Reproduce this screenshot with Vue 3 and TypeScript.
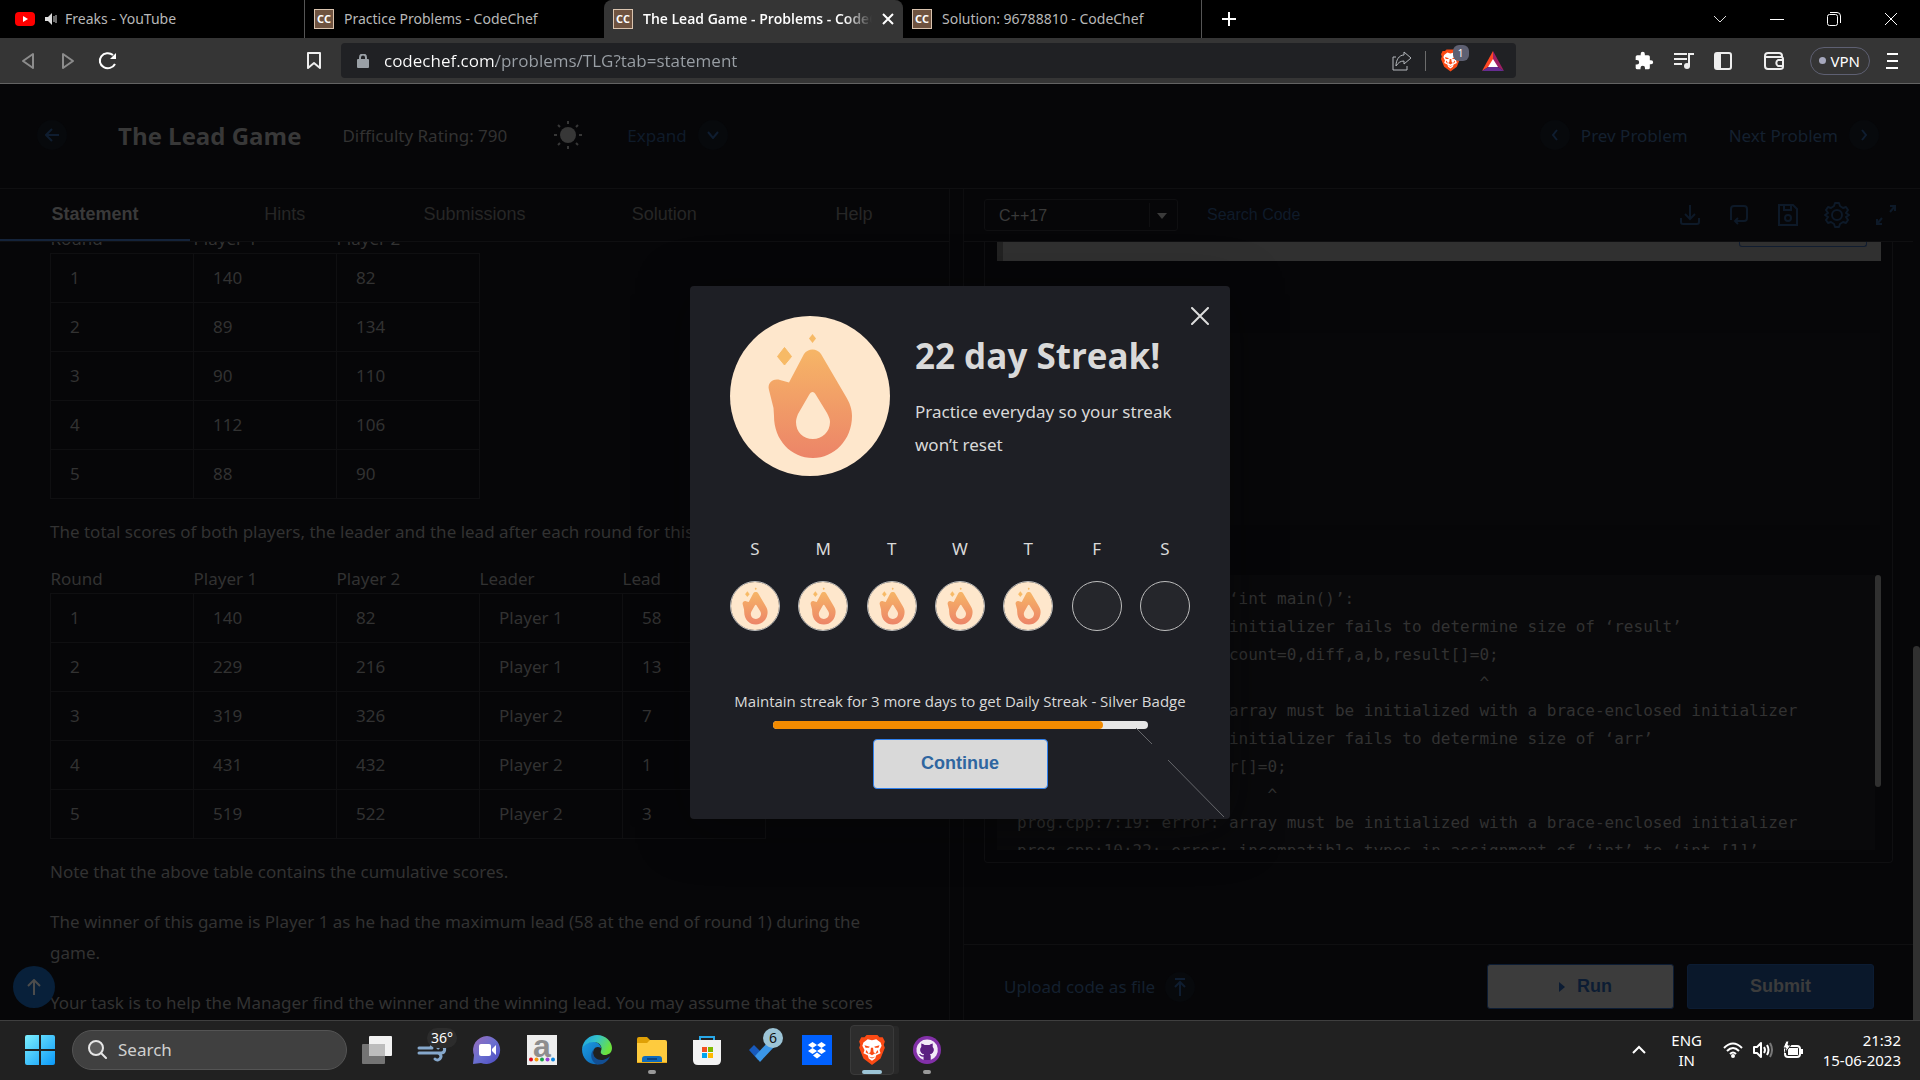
<script setup lang="ts">
import { ref } from 'vue'

interface BrowserTab {
  title: string
  icon: 'youtube' | 'codechef'
  active?: boolean
}

const browserTabs: BrowserTab[] = [
  { title: 'Freaks - YouTube', icon: 'youtube' },
  { title: 'Practice Problems - CodeChef', icon: 'codechef' },
  { title: 'The Lead Game - Problems - CodeChef', icon: 'codechef', active: true },
  { title: 'Solution: 96788810 - CodeChef', icon: 'codechef' },
]

const url = ref('codechef.com/problems/TLG?tab=statement')
const language = ref('C++17')
const query = ref('')

const sections: string[] = ['Statement', 'Hints', 'Submissions', 'Solution', 'Help']

const roundRows: number[][] = [
  [1, 140, 82],
  [2, 89, 134],
  [3, 90, 110],
  [4, 112, 106],
  [5, 88, 90],
]

const totalRows: (number | string)[][] = [
  [1, 140, 82, 'Player 1', 58],
  [2, 229, 216, 'Player 1', 13],
  [3, 319, 326, 'Player 2', 7],
  [4, 431, 432, 'Player 2', 1],
  [5, 519, 522, 'Player 2', 3],
]

const compilerOutput: string = [
  'prog.cpp: In function ‘int main()’:',
  'prog.cpp:6:37: error: initializer fails to determine size of ‘result’',
  '                  int count=0,diff,a,b,result[]=0;',
  ' '.repeat(48) + '^',
  'prog.cpp:6:37: error: array must be initialized with a brace-enclosed initializer',
  'prog.cpp:7:19: error: initializer fails to determine size of ‘arr’',
  '                int arr[]=0;',
  ' '.repeat(26) + '^',
  'prog.cpp:7:19: error: array must be initialized with a brace-enclosed initializer',
  'prog.cpp:10:22: error: incompatible types in assignment of ‘int’ to ‘int [1]’',
].join('\n')

const week: { day: string; done: boolean }[] = [
  { day: 'S', done: true },
  { day: 'M', done: true },
  { day: 'T', done: true },
  { day: 'W', done: true },
  { day: 'T', done: true },
  { day: 'F', done: false },
  { day: 'S', done: false },
]

const streak = 22
const target = 25
const progress = `${(streak / target) * 100}%`
</script>

<template>
  <div class="screen">
    <svg class="defs" width="0" height="0" aria-hidden="true">
      <defs>
        <linearGradient id="flame-fill" x1="0" y1="17" x2="0" y2="142" gradientUnits="userSpaceOnUse">
          <stop offset="0" stop-color="#f8bd66" />
          <stop offset="1" stop-color="#ec8468" />
        </linearGradient>
        <symbol id="flame" viewBox="0 0 160 160">
          <circle cx="80" cy="80" r="80" fill="#fee7cc" />
          <path
            fill="url(#flame-fill)"
            d="M74 38C78 32 87 32 91 38L115 79C120 87 122 93 122 100C122 124 104 142 83 142C61 142 44 124 44 100L43.500 92L39 74C37 67 43 62 50 64L59 66.500Z"
          />
          <path fill="#fee7cc" d="M79 79C81 75 84 75 86 79L97 97C99 101 100 103 100 106C100 116 92 123 83 123C73 123 66 116 66 106C66 103 67 101 68 98Z" />
          <path fill="#f7ba66" d="M54.500 31.500L61.500 40.500L54.500 49L47.500 40.500Z" stroke="#f7ba66" stroke-linejoin="round" />
          <path fill="#f7ba66" d="M82.500 18L86 22.500L82.500 27L79 22.500Z" />
        </symbol>
        <symbol id="lion" viewBox="0 0 24 28">
          <path fill="#fb4a14" d="M7 0H17L19 2L22 2L24 6L23 9L24 12L20 22L12 28L4 22L0 12L1 9L0 6L2 2L5 2Z" />
          <path
            fill="#fff"
            d="M8 4L12 5L16 4L20 7L21 10L19 14L20 17L16 19L15 22L12 24L9 22L8 19L4 17L5 14L3 10L4 7Z"
          />
          <path fill="#fb4a14" d="M5 9.500L10 11L9 12L6 12ZM19 9.500L14 11L15 12L18 12ZM11 12H13L13.500 16L15 17L12 19L9 17L10.500 16ZM8.500 20L12 21L15.500 20L12 22ZM7 14L9 18L6 16ZM17 14L15 18L18 16Z" />
        </symbol>
      </defs>
    </svg>

    <header class="chrome">
      <div class="tabstrip">
        <div v-for="tab in browserTabs" :key="tab.title" class="tab" :class="{ active: tab.active }">
          <template v-if="tab.icon === 'youtube'">
            <svg class="favicon" width="20" height="20" viewBox="0 0 20 20">
              <rect y="3" width="20" height="14" rx="4" fill="#f00" />
              <path d="M8 7L13 10L8 13Z" fill="#fff" />
            </svg>
            <svg class="speaker" width="12" height="12" viewBox="0 0 12 12">
              <path d="M0 4H3L7 0V12L3 8H0Z" fill="#ddd" />
              <path d="M9 3V9M11 2V10" stroke="#ddd" fill="none" />
            </svg>
          </template>
          <span v-else class="favicon cc">CC</span>
          <span class="tab-title">{{ tab.title }}</span>
          <button v-if="tab.active" class="plain" aria-label="Close tab">
            <svg width="12" height="12" viewBox="0 0 12 12"><path d="M1 1L11 11M11 1L1 11" stroke="#fff" stroke-width="2" /></svg>
          </button>
        </div>
        <button class="plain new-tab" aria-label="New tab">
          <svg width="16" height="16" viewBox="0 0 16 16"><path d="M8 1V15M1 8H15" stroke="#fff" stroke-width="2" /></svg>
        </button>
        <div class="window-controls">
          <button class="plain" aria-label="Search tabs">
            <svg width="14" height="14" viewBox="0 0 14 14"><path d="M1 4L7 10L13 4" stroke="#ddd" fill="none" /></svg>
          </button>
          <button class="plain" aria-label="Minimize">
            <svg width="14" height="14" viewBox="0 0 14 14"><path d="M0 7.500H14" stroke="#fff" /></svg>
          </button>
          <button class="plain" aria-label="Restore">
            <svg width="14" height="14" viewBox="0 0 14 14">
              <rect x=".5" y="2.500" width="10" height="11" rx="2" fill="none" stroke="#fff" />
              <path d="M3 .5H10Q13.500 .5 13.500 4V11" fill="none" stroke="#fff" />
            </svg>
          </button>
          <button class="plain" aria-label="Close window">
            <svg width="14" height="14" viewBox="0 0 14 14"><path d="M1 1L13 13M13 1L1 13" stroke="#fff" /></svg>
          </button>
        </div>
      </div>

      <div class="toolbar">
        <div class="nav-buttons">
          <button class="plain" aria-label="Back">
            <svg width="20" height="20" viewBox="0 0 20 20"><path d="M15 3V17L5 10Z" fill="none" stroke="#8c8c8c" stroke-width="2" stroke-linejoin="round" /></svg>
          </button>
          <button class="plain" aria-label="Forward">
            <svg width="20" height="20" viewBox="0 0 20 20"><path d="M5 3V17L15 10Z" fill="none" stroke="#8c8c8c" stroke-width="2" stroke-linejoin="round" /></svg>
          </button>
          <button class="plain" aria-label="Reload">
            <svg width="20" height="20" viewBox="0 0 20 20">
              <path d="M17 13A8 7.500 0 1 1 15 4" fill="none" stroke="#fff" stroke-width="2" />
              <path d="M18 2V8H12Z" fill="#fff" />
            </svg>
          </button>
        </div>
        <button class="plain bookmark" aria-label="Bookmark this page">
          <svg width="14" height="18" viewBox="0 0 14 18"><path d="M1 1H13V16L7 11L1 16Z" fill="none" stroke="#eee" stroke-width="2" stroke-linejoin="round" /></svg>
        </button>
        <div class="address">
          <svg width="12" height="14" viewBox="0 0 12 14">
            <rect y="5" width="12" height="9" rx="1" fill="#9aa0a6" />
            <path d="M3 6V3.500A3 3 0 0 1 9 3.500V6" fill="none" stroke="#9aa0a6" stroke-width="2" />
          </svg>
          <input v-model="url" type="text" aria-label="Address" spellcheck="false" />
          <svg width="20" height="20" viewBox="0 0 20 20" fill="none" stroke="#b4b8bc">
            <path d="M4 6H1V19H15V15" stroke-width="1" />
            <path d="M12 1L19 7L12 13V10C8 10 6 12 4 15C4 9 7 4 12 4Z" stroke-linejoin="round" />
          </svg>
          <i class="divider"></i>
          <span class="shield">
            <svg width="19" height="23"><use href="#lion" /></svg>
            <b>1</b>
          </span>
          <svg width="22" height="20" viewBox="0 0 22 20">
            <path d="M11 0L0 20L11 13Z" fill="#ff4724" />
            <path d="M11 0L22 20L11 13Z" fill="#9e1f63" />
            <path d="M0 20H22L11 13Z" fill="#662d91" />
            <path d="M11 8L16 16H6Z" fill="#fff" />
          </svg>
        </div>
        <div class="extensions">
          <svg width="20" height="20" viewBox="0 0 24 24"><path fill="#fff" d="M20.500 11H19V7a2 2 0 0 0-2-2h-4V3.500a2.500 2.500 0 0 0-5 0V5H4a2 2 0 0 0-2 2v3.800h1.500a2.700 2.700 0 0 1 0 5.400H2V20a2 2 0 0 0 2 2h3.800v-1.500a2.700 2.700 0 0 1 5.400 0V22H17a2 2 0 0 0 2-2v-4h1.500a2.500 2.500 0 0 0 0-5z" /></svg>
          <svg width="20" height="18" viewBox="0 0 20 18">
            <path d="M0 2H13M0 7H13M0 12H8M15 14V2H20" stroke="#eee" stroke-width="2" fill="none" />
            <circle cx="13" cy="14" r="3" fill="#eee" />
          </svg>
          <svg class="wide-gap" width="18" height="18" viewBox="0 0 18 18">
            <rect x="1" y="1" width="16" height="16" rx="2" fill="none" stroke="#eee" stroke-width="2" />
            <path d="M1 1H7V17H1Z" fill="#eee" />
          </svg>
          <svg width="20" height="18" viewBox="0 0 20 18" fill="none" stroke="#eee" stroke-width="2">
            <path d="M18 5V4Q18 1 15 1H4Q1 1 1 4V14Q1 17 4 17H16Q19 17 19 15M1 5H17Q19 5 19 7V14H14A3.500 3.500 0 0 1 14 8H19" />
          </svg>
          <button class="vpn"><i></i>VPN</button>
          <button class="plain" aria-label="Menu">
            <svg width="12" height="18" viewBox="0 0 12 18"><path d="M1 2H12M1 9H12M0 16H12" stroke="#fff" stroke-width="2" /></svg>
          </button>
        </div>
      </div>
    </header>

    <main class="page">
      <header class="problem-header">
        <a class="circle" href="#back" aria-label="Back">
          <svg width="14" height="14" viewBox="0 0 14 14"><path d="M14 7H2M7 1L1 7L7 13" /></svg>
        </a>
        <h1>The Lead Game</h1>
        <span class="rating">Difficulty Rating: 790</span>
        <button class="plain sun" aria-label="Switch theme">
          <svg width="28" height="28" viewBox="0 0 28 28">
            <circle cx="14" cy="14" r="8" fill="#373737" />
            <path d="M14 0V3M14 25V28M0 14H3M25 14H28M4 4L6 6M22 22L24 24M4 24L6 22M22 6L24 4" stroke="#373737" stroke-width="2" />
          </svg>
        </button>
        <a class="link-group expand" href="#expand">
          Expand
          <span class="circle"><svg width="12" height="8" viewBox="0 0 12 8"><path d="M1 1L6 7L11 1" /></svg></span>
        </a>
        <nav class="pager">
          <a class="link-group" href="#prev">
            <span class="circle"><svg width="8" height="12" viewBox="0 0 8 12"><path d="M6 1L2 6L6 11" /></svg></span>
            Prev Problem
          </a>
          <a class="link-group" href="#next">
            Next Problem
            <span class="circle"><svg width="8" height="12" viewBox="0 0 8 12"><path d="M2 1L6 6L2 11" /></svg></span>
          </a>
        </nav>
      </header>

      <div class="panes">
        <section class="statement">
          <nav class="sections">
            <button v-for="(name, i) in sections" :key="name" :class="{ current: i === 0 }">{{ name }}</button>
          </nav>
          <div class="scroll-area">
            <article class="prose">
              <table>
                <thead>
                  <tr><th>Round</th><th>Player 1</th><th>Player 2</th></tr>
                </thead>
                <tbody>
                  <tr v-for="row in roundRows" :key="row[0]">
                    <td v-for="(cell, i) in row" :key="i">{{ cell }}</td>
                  </tr>
                </tbody>
              </table>
              <p>The total scores of both players, the leader and the lead after each round for this game is:</p>
              <table>
                <thead>
                  <tr><th>Round</th><th>Player 1</th><th>Player 2</th><th>Leader</th><th>Lead</th></tr>
                </thead>
                <tbody>
                  <tr v-for="row in totalRows" :key="row[0]">
                    <td v-for="(cell, i) in row" :key="i">{{ cell }}</td>
                  </tr>
                </tbody>
              </table>
              <p>Note that the above table contains the cumulative scores.</p>
              <p>The winner of this game is Player 1 as he had the maximum lead (58 at the end of round 1) during the<br />game.</p>
              <p>Your task is to help the Manager find the winner and the winning lead. You may assume that the scores</p>
            </article>
          </div>
        </section>

        <section class="workbench">
          <div class="editor-bar">
            <div class="select-box">
              <select v-model="language" aria-label="Language">
                <option>C++17</option>
                <option>Python3</option>
                <option>Java</option>
              </select>
              <i></i>
              <svg width="10" height="6" viewBox="0 0 10 6"><path d="M0 0H10L5 6Z" fill="#3a3a3a" /></svg>
            </div>
            <a class="search-code" href="#search">Search Code</a>
            <div class="editor-icons">
              <button class="plain" aria-label="Download">
                <svg width="26" height="26" viewBox="0 0 26 26"><path d="M13 3V17M8 12L13 17L18 12M4 16V20Q4 22 6 22H20Q22 22 22 20V16" /></svg>
              </button>
              <button class="plain" aria-label="Reset">
                <svg width="26" height="26" viewBox="0 0 26 26"><path d="M5 18V7Q5 4 8 4H18Q21 4 21 7V16Q21 19 18 19H9M12 16L9 19L12 22" /></svg>
              </button>
              <button class="plain" aria-label="Save">
                <svg width="26" height="26" viewBox="0 0 26 26"><path d="M4 3H18L22 7V23H4ZM9 3V8H16V3" /><circle cx="13" cy="16" r="3" /></svg>
              </button>
              <button class="plain" aria-label="Settings">
                <svg width="26" height="26" viewBox="0 0 26 26">
                  <path d="M11 1H15L16 4L19 6L22 5L24 8L22 11L25 13L22 15L24 18L22 21L19 20L16 22L15 25H11L10 22L7 20L4 21L2 18L4 15L1 13L4 11L2 8L4 5L7 6L10 4Z" stroke-linejoin="round" />
                  <circle cx="13" cy="13" r="5" />
                </svg>
              </button>
              <button class="plain" aria-label="Full screen">
                <svg width="26" height="26" viewBox="0 0 26 26"><path d="M17 4H22V9M22 4L17 10M4 17V22H9M4 22L9 16" /></svg>
              </button>
            </div>
          </div>
          <div class="card">
            <div class="editor-strip"><span></span></div>
            <div class="tests"></div>
            <div class="output-row">
              <pre class="output">{{ compilerOutput }}</pre>
              <i class="output-scroll"></i>
            </div>
          </div>
          <footer class="actions">
            <a class="link-group" href="#upload">
              Upload code as file
              <span class="circle"><svg width="14" height="18" viewBox="0 0 14 18"><path d="M2 1H12M7 18V4M2 9L7 4L12 9" /></svg></span>
            </a>
            <button class="run">
              <svg width="6" height="10" viewBox="0 0 6 10"><path d="M0 0L6 5L0 10Z" fill="#0c1c33" /></svg>Run
            </button>
            <button class="submit">Submit</button>
          </footer>
        </section>
      </div>

      <button class="to-top" aria-label="Scroll to top">
        <svg width="16" height="16" viewBox="0 0 16 16"><path d="M8 16V1M2 7L8 1L14 7" fill="none" stroke="#4c4c4c" stroke-width="2" /></svg>
      </button>
      <i class="page-scroll"></i>

      <div class="backdrop">
        <section class="dialog" role="dialog" aria-labelledby="streak-title">
          <svg class="etching" width="90" height="92" viewBox="0 0 90 92">
            <path d="M0 1L16 17M32 33L88 90" stroke="#66676b" fill="none" />
          </svg>
          <button class="plain close" aria-label="Close">
            <svg width="18" height="18" viewBox="0 0 18 18"><path d="M1 1L17 17M17 1L1 17" stroke="#ddd" stroke-width="2" stroke-linecap="round" /></svg>
          </button>
          <div class="streak-head">
            <svg width="160" height="160"><use href="#flame" /></svg>
            <div>
              <h2 id="streak-title">{{ streak }} day Streak!</h2>
              <p>Practice everyday so your streak won’t reset</p>
            </div>
          </div>
          <ol class="week">
            <li v-for="(entry, i) in week" :key="i">
              <span>{{ entry.day }}</span>
              <div class="day-dot">
                <svg v-if="entry.done" width="48" height="48"><use href="#flame" /></svg>
              </div>
            </li>
          </ol>
          <p class="goal">Maintain streak for {{ target - streak }} more days to get Daily Streak - Silver Badge</p>
          <div class="meter"><div :style="{ width: progress }"></div></div>
          <button class="continue">Continue</button>
        </section>
      </div>
    </main>

    <footer class="taskbar">
      <button class="plain start" aria-label="Start">
        <svg width="30" height="30" viewBox="0 0 30 30">
          <defs>
            <linearGradient id="win" x1="0" y1="0" x2="1" y2="1"><stop offset="0" stop-color="#7df0ff" /><stop offset="1" stop-color="#0a98f8" /></linearGradient>
          </defs>
          <path fill="url(#win)" d="M0 2Q0 0 2 0H14V14H0ZM16 0H28Q30 0 30 2V14H16ZM0 16H14V30H2Q0 30 0 28ZM16 16H30V28Q30 30 28 30H16Z" />
        </svg>
      </button>
      <label class="search">
        <svg width="20" height="20" viewBox="0 0 20 20" fill="none" stroke="#e6e6e6" stroke-width="2"><circle cx="9" cy="8" r="7" fill="#5c5c5c" /><path d="M14 13L19 18" stroke-linecap="round" /></svg>
        <input v-model="query" type="search" placeholder="Search" aria-label="Search" />
      </label>
      <div class="apps">
        <button class="plain app" aria-label="Task view">
          <svg width="30" height="30" viewBox="0 0 30 30"><rect x="7" y="1" width="23" height="20" rx="1" fill="#f2f2f2" /><rect y="9" width="23" height="20" rx="1" fill="#8a8a8a" fill-opacity=".8" /><rect x="7" y="9" width="16" height="12" fill="#bdbdbd" /></svg>
        </button>
        <button class="plain app" aria-label="Weather">
          <svg width="30" height="30" viewBox="0 0 30 30" fill="none" stroke="#86a8cc" stroke-width="3" stroke-linecap="round"><path d="M2 13H15M2 18H24A3.500 3.500 0 1 0 21 13M14 18H20A3.500 3.500 0 1 1 18 24M14 12Q16 10 14 8" /></svg>
          <b class="badge weather">36°</b>
        </button>
        <button class="plain app" aria-label="Chat">
          <svg width="30" height="30" viewBox="0 0 30 30">
            <defs><linearGradient id="chat" x1="0" y1="0" x2="1" y2="1"><stop offset="0" stop-color="#9a6bb8" /><stop offset=".5" stop-color="#6a6fd0" /><stop offset="1" stop-color="#4a48c0" /></linearGradient></defs>
            <path fill="url(#chat)" d="M15 1A14 14 0 1 1 9 28L1 29L2 20A14 14 0 0 1 15 1Z" />
            <rect x="7" y="9" width="12" height="12" rx="2" fill="#fff" /><path d="M20 14L24 10V20L20 16Z" fill="#fff" />
          </svg>
        </button>
        <button class="plain app" aria-label="Amazon">
          <span class="amazon">a<svg width="30" height="5" viewBox="0 0 30 5"><circle cx="4" cy="2.500" r="2" fill="#e00b1c" /><circle cx="9.500" cy="2.500" r="2" fill="#f59a0a" /><circle cx="15" cy="2.500" r="2" fill="#17a34a" /><circle cx="20.500" cy="2.500" r="2" fill="#9a3fd6" /><circle cx="26" cy="2.500" r="2" fill="#0a84e0" /></svg></span>
        </button>
        <button class="plain app" aria-label="Edge">
          <svg width="30" height="30" viewBox="0 0 30 30">
            <defs>
              <linearGradient id="edge-a" x1="0" y1="0" x2="1" y2=".4"><stop offset="0" stop-color="#1aa0e8" /><stop offset=".5" stop-color="#35c3c8" /><stop offset="1" stop-color="#6be23e" /></linearGradient>
              <linearGradient id="edge-b" x1="0" y1="0" x2="1" y2="1"><stop offset="0" stop-color="#1b9de2" /><stop offset="1" stop-color="#0c5fb0" /></linearGradient>
            </defs>
            <path fill="url(#edge-b)" d="M0 14C2 8 8 6 13 7C17 8 19 11 19 13C14 10 11 14 11 18C11 24 16 28 22 27C12 33 0 27 0 14Z" />
            <path fill="#124f94" d="M12 14C9 20 14 26 21 25C25 24 27 22 28 21C26 27 20 31 14 29C8 25 8 18 12 14Z" />
            <path fill="url(#edge-a)" d="M0 14C1 5 8 0 15 0C24 0 30 7 30 13C30 18 26 20 23 20C20 20 18 18 19 16C21 11 17 7 12 7C6 7 2 10 0 14Z" />
          </svg>
        </button>
        <button class="plain app running" aria-label="File Explorer">
          <svg width="30" height="30" viewBox="0 0 30 30">
            <path fill="#dfa006" d="M0 4Q0 2 2 2H10L13 5V12H0Z" /><path fill="#fecb3e" d="M0 8H10L13 5H28Q30 5 30 7V28H0Z" />
            <path fill="#0f6cbd" d="M5 28V24Q5 21 8 21H22Q25 21 25 24V28Z" /><path d="M10 24H20" stroke="#0a4482" stroke-width="2" /><path fill="#e9a914" d="M0 27H30V28Q30 28 28 28H0Z" />
          </svg>
        </button>
        <button class="plain app" aria-label="Microsoft Store">
          <svg width="30" height="30" viewBox="0 0 30 30">
            <path d="M8 7V2H22V7" fill="none" stroke="#28a8e8" stroke-width="2" /><path fill="#f3f3f3" d="M1 5H29V25Q29 30 24 30H6Q1 30 1 25Z" />
            <path fill="#f25022" d="M10 12H15V17H10Z" /><path fill="#7fba00" d="M16 12H21V17H16Z" /><path fill="#00a4ef" d="M10 18H15V23H10Z" /><path fill="#ffb900" d="M16 18H21V23H16Z" />
          </svg>
        </button>
        <button class="plain app" aria-label="To Do">
          <svg width="30" height="30" viewBox="0 0 30 30"><path fill="#185abd" d="M2 15L7 10L16 19L11 25Z" /><path fill="#3a96e8" d="M8 21L22 6L28 11L13 27Z" /></svg>
          <b class="badge todo">6</b>
        </button>
        <button class="plain app" aria-label="Dropbox">
          <svg width="30" height="30" viewBox="0 0 30 30"><rect width="30" height="30" fill="#0061ff" /><path fill="#fff" d="M10.500 7L15 10L10.500 13L6 10ZM19.500 7L24 10L19.500 13L15 10ZM10.500 13L15 16L10.500 19L6 16ZM19.500 13L24 16L19.500 19L15 16ZM15 17.500L19 20.500L15 23.500L11 20.500Z" /></svg>
        </button>
        <button class="plain app current" aria-label="Brave">
          <svg width="26" height="30"><use href="#lion" /></svg>
        </button>
        <button class="plain app running" aria-label="GitHub Desktop">
          <svg width="28" height="28" viewBox="0 0 28 28"><circle cx="14" cy="14" r="14" fill="#8230a8" /><path fill="#f2eaf7" d="M14 3.500A10.500 10.500 0 0 0 10.700 24V20.500C7.500 21 7 19 6 18C8 18 8 20 10.700 19.500L11 18C7 17.500 6.500 13 8.500 11V7.500L11.500 9H16.500L19.500 7.500V11C21.500 13 21 17.500 17 18L17.500 20V24A10.500 10.500 0 0 0 14 3.500Z" /><path fill="#5b1f80" d="M8.500 7.500L11.500 9H16.500L19.500 7.500V11C21.500 13 21 17.500 17 18L17.500 20V24H10.700V20.500C7.500 21 7 19 6 18C8 18 8 20 10.700 19.500L11 18C7 17.500 6.500 13 8.500 11Z" /></svg>
        </button>
      </div>
      <div class="tray">
        <button class="plain" aria-label="Hidden icons">
          <svg width="14" height="10" viewBox="0 0 14 10"><path d="M1 8L7 2L13 8" fill="none" stroke="#fff" stroke-width="2" /></svg>
        </button>
        <div class="lang">ENG<br />IN</div>
        <div class="status">
          <svg width="20" height="18" viewBox="0 0 20 18" fill="none" stroke="#fff" stroke-width="2"><path d="M1 7Q10 -2 19 7M4 10Q10 4 16 10M7 13Q10 10 13 13" /><circle cx="10" cy="15" r="1" /></svg>
          <svg width="20" height="18" viewBox="0 0 20 18" fill="none" stroke="#fff" stroke-width="2"><path d="M1 6H4L8 2V16L4 12H1Z" stroke-linejoin="round" /><path d="M11 6Q13 9 11 12M14 4Q17 9 14 14" /><path d="M17 2Q21 9 17 16" stroke="#777" /></svg>
          <svg width="20" height="18" viewBox="0 0 20 18"><rect x="2" y="5" width="15" height="11" rx="3" fill="none" stroke="#fff" stroke-width="2" /><rect x="5" y="7" width="10" height="7" fill="#fff" /><path d="M18 8H20V13H18Z" fill="#fff" /><path d="M3 0L0 7H3L2 12L8 4H5L6 0Z" fill="#fff" stroke="#222" /></svg>
        </div>
        <div class="clock">21:32<br />15-06-2023</div>
      </div>
    </footer>
  </div>
</template>

<style>
body {
  background: #000;
}
</style>

<style scoped>
.screen {
  --ui: 'Noto Sans', 'Open Sans', sans-serif;
  --open: 'Open Sans', 'Noto Sans', sans-serif;
  --arial: 'Liberation Sans', Arial, sans-serif;
  display: flex;
  flex-direction: column;
  height: 100vh;
  overflow: hidden;
  font-family: var(--ui);
  font-size: 17px;
  color: #323232;
  background: #060608;
}
.screen * {
  box-sizing: border-box;
}
.defs {
  position: absolute;
}
svg {
  display: block;
  flex: none;
}
button,
input,
select {
  font: inherit;
  color: inherit;
}
a {
  color: inherit;
  text-decoration: none;
}
.plain {
  display: flex;
  align-items: center;
  justify-content: center;
  padding: 0;
  border: 0;
  background: none;
}

/* browser chrome */
.tabstrip {
  display: flex;
  height: 38px;
  background: #000;
  color: #b8b8b8;
  font-size: 14px;
}
.tab {
  display: flex;
  align-items: center;
  gap: 10px;
  flex: 0 1 299px;
  min-width: 0;
  padding: 0 8px 0 9px;
  border-right: 1px solid #000;
}
.tab:first-child {
  flex-basis: 305px;
  padding-left: 15px;
  border-color: #555;
}
.tab:nth-child(4) {
  border-color: #555;
}
.tab.active {
  background: #353535;
  border-color: #353535;
  border-radius: 8px 8px 0 0;
  color: #fff;
  font-family: var(--open);
  font-weight: 600;
}
.tab-title {
  flex: 1;
  min-width: 0;
  overflow: hidden;
  white-space: nowrap;
  line-height: 20px;
}
.active .tab-title {
  mask-image: linear-gradient(90deg, #000 88%, transparent);
}
.favicon {
  flex: none;
  width: 20px;
  height: 20px;
}
.speaker {
  margin-right: -2px;
}
.cc {
  border: 1px solid #d9c3ae;
  background: #6f5340;
  color: #fff;
  font-size: 11px;
  font-weight: 700;
  line-height: 18px;
  text-align: center;
}
.new-tab {
  width: 54px;
}
.window-controls {
  display: flex;
  margin-left: auto;
  padding-right: 1px;
}
.window-controls button {
  width: 57px;
}
.toolbar {
  display: flex;
  align-items: center;
  height: 46px;
  border-bottom: 1px solid #636363;
  background: #353535;
}
.nav-buttons {
  display: flex;
  gap: 20px;
  padding-left: 18px;
}
.bookmark {
  margin-left: 189px;
}
.address {
  display: flex;
  align-items: center;
  flex: 1;
  height: 35px;
  margin-left: 20px;
  padding: 0 12px 0 16px;
  border-radius: 4px;
  background: #202124;
}
.address input {
  flex: 1;
  min-width: 0;
  height: 24px;
  margin-left: 15px;
  padding: 0;
  border: 0;
  outline: 0;
  background: linear-gradient(90deg, #fff 112px, #9aa0a6 112px) text;
  color: transparent;
  font-family: var(--open);
}
.divider {
  width: 1px;
  height: 20px;
  margin: 0 15px 0 13px;
  background: #6c6c6c;
}
.shield {
  position: relative;
  margin-right: 22px;
}
.shield b {
  position: absolute;
  top: -4px;
  left: 12px;
  width: 16px;
  height: 16px;
  border-radius: 6px;
  background: #5e6072;
  color: #fff;
  font-size: 10px;
  font-weight: 400;
  line-height: 16px;
  text-align: center;
}
.extensions {
  display: flex;
  align-items: center;
  gap: 20px;
  padding: 0 22px 0 118px;
}
.wide-gap {
  margin-right: 12px;
}
.vpn {
  display: flex;
  align-items: center;
  gap: 5px;
  height: 28px;
  margin: 0 -4px 0 6px;
  padding: 0 9px 0 8px;
  border: 1px solid #5e6072;
  border-radius: 14px;
  background: none;
  color: #fff;
  font-size: 15px;
}
.vpn i {
  width: 7px;
  height: 7px;
  border-radius: 50%;
  background: #a6a8bd;
}

/* page */
.page {
  position: relative;
  display: flex;
  flex: 1;
  flex-direction: column;
  min-height: 0;
  padding-right: 7px;
}
.problem-header {
  display: flex;
  align-items: center;
  flex: none;
  height: 105px;
  padding: 0 34px 2px 37px;
  border-bottom: 1px solid #0f0f11;
  margin-right: -7px;
}
.circle {
  display: flex;
  align-items: center;
  justify-content: center;
  flex: none;
  width: 30px;
  height: 30px;
  border-radius: 50%;
  background: #07090c;
}
.circle svg {
  fill: none;
  stroke: #0f1d30;
  stroke-width: 2;
}
h1 {
  margin: 0 41px 0 51px;
  color: #383838;
  font-family: var(--open);
  font-size: 24px;
  font-weight: 700;
}
.sun {
  margin: 0 45px 0 47px;
}
.link-group {
  display: flex;
  align-items: center;
  gap: 11px;
  color: #14202f;
}
.expand {
  color: #0f1b2a;
}
.pager {
  display: flex;
  gap: 41px;
  margin-left: auto;
  padding-right: 7px;
}
.panes {
  display: grid;
  flex: 1;
  grid-template-columns: 1fr 1fr;
  gap: 13px;
  min-height: 0;
}
.statement,
.workbench {
  display: flex;
  flex-direction: column;
  min-width: 0;
  min-height: 0;
}
.statement {
  border-right: 1px solid #0d0d0f;
}
.workbench {
  border-left: 1px solid #0d0d0f;
}
.sections {
  display: grid;
  flex: none;
  grid-template-columns: repeat(5, 1fr);
  height: 53px;
  border-bottom: 1px solid #0f0f11;
}
.sections button {
  padding: 0;
  border: 0;
  border-bottom: 2px solid transparent;
  background: none;
  color: #262626;
  font: 18px/50px var(--arial);
}
.sections .current {
  border-color: #14233a;
  color: #3a3a3a;
  font-weight: 700;
}
.scroll-area {
  flex: 1;
  min-height: 0;
  overflow: hidden;
}
.prose {
  margin-top: -16px;
  padding: 0 50px;
  line-height: 31px;
}
.prose p {
  margin: 17px 0 19px;
  padding-bottom: 0;
}
.prose p + p {
  margin-top: 18px;
}
table {
  border-collapse: collapse;
  table-layout: fixed;
  width: min-content;
}
th {
  width: 143px;
  min-width: 143px;
  padding: 0 0 2px;
  font-weight: 400;
  line-height: 25px;
  text-align: left;
}
td {
  height: 49px;
  padding: 0 19px 1px;
  border: 1px solid #0f0f11;
}
.editor-bar {
  display: flex;
  align-items: center;
  flex: none;
  height: 53px;
  padding: 0 14px 0 20px;
  border-bottom: 1px solid #0f0f11;
  font-family: var(--arial);
  font-size: 16px;
}
.select-box {
  position: relative;
  width: 194px;
  height: 32px;
  border: 1px solid #0f0f11;
  border-radius: 3px;
}
.select-box select {
  width: 100%;
  height: 100%;
  padding: 0 14px;
  border: 0;
  appearance: none;
  background: none;
  color: #3a3a3a;
}
.select-box i {
  position: absolute;
  top: 3px;
  right: 27px;
  width: 1px;
  height: 24px;
  background: #0f0f11;
}
.select-box svg {
  position: absolute;
  top: 13px;
  right: 10px;
  pointer-events: none;
}
.search-code {
  margin-left: 29px;
  color: #0f1b2a;
}
.editor-icons {
  display: flex;
  gap: 23px;
  margin-left: auto;
}
.editor-icons svg {
  fill: none;
  stroke: #0d1928;
  stroke-width: 2;
}
.card {
  display: flex;
  flex-direction: column;
  margin: 0 20px;
  border: 1px solid #0f0f11;
  border-top: 0;
  border-radius: 0 0 4px 4px;
}
.editor-strip {
  display: flex;
  justify-content: flex-end;
  height: 19px;
  margin: 0 11px 0 12px;
  padding-right: 14px;
  border-left: 6px solid #222;
  background: #303030;
}
.editor-strip span {
  width: 128px;
  height: 5px;
  border: 1px solid #101c30;
  border-top: 0;
  border-radius: 0 0 3px 3px;
}
.tests {
  height: 192px;
  margin: 72px 12px 50px;
  background: #070709;
}
.output-row {
  display: flex;
  margin: 0 11px 12px 12px;
}
.output {
  flex: 1;
  min-width: 0;
  height: 275px;
  margin: 0;
  padding: 10px 20px;
  overflow: hidden;
  background: #09090b;
  color: #323232;
  font: 16px/28px 'DejaVu Sans Mono', monospace;
}
.output-scroll {
  width: 6px;
  height: 212px;
  border-radius: 3px;
  background: #303030;
}
.actions {
  display: flex;
  align-items: center;
  flex: none;
  height: 76px;
  margin-top: auto;
  padding: 8px 39px 0 40px;
  border-top: 1px solid #0f0f11;
}
.actions .link-group {
  margin-right: auto;
  gap: 10px;
}
.run,
.submit {
  display: flex;
  align-items: center;
  justify-content: center;
  gap: 12px;
  width: 187px;
  height: 45px;
  margin: 0;
  border: 1px solid #0c1c33;
  border-radius: 3px;
  font: 700 18px var(--arial);
}
.run {
  margin-right: 13px;
  padding-left: 16px;
  background: #3c3c3c;
  color: #0c1c33;
}
.submit {
  background: #0a182b;
  color: #3c3c3c;
}
.to-top {
  position: absolute;
  bottom: 12px;
  left: 13px;
  display: flex;
  align-items: center;
  justify-content: center;
  width: 42px;
  height: 42px;
  border: 0;
  border-radius: 50%;
  background: #08203a;
}
.page-scroll {
  position: absolute;
  right: 0;
  bottom: 0;
  width: 7px;
  height: 40%;
  border-radius: 4px 4px 0 0;
  background: #303030;
}

/* streak dialog */
.backdrop {
  position: absolute;
  inset: 0;
  display: flex;
  align-items: center;
  justify-content: center;
}
.dialog {
  position: relative;
  width: 540px;
  padding: 30px 40px;
  border-radius: 4px;
  background: #1e1f25;
  box-shadow: 0 8px 50px rgb(6 6 6 / 50%);
  color: #d9d9d9;
}
.etching {
  position: absolute;
  right: 4px;
  bottom: 0;
}
.close {
  position: absolute;
  top: 21px;
  right: 21px;
}
.streak-head {
  display: flex;
  gap: 25px;
}
h2 {
  margin: 15px 0 14px;
  font-family: var(--open);
  font-size: 35px;
  font-weight: 700;
  line-height: 50px;
}
.streak-head p {
  margin: 0;
  line-height: 33px;
}
.week {
  display: flex;
  justify-content: space-between;
  margin: 57px 0 0;
  padding: 0;
  list-style: none;
  text-align: center;
}
.week span {
  display: block;
  line-height: 32px;
}
.day-dot {
  width: 50px;
  height: 50px;
  margin-top: 16px;
  border: 1px solid #bdbdbd;
  border-radius: 50%;
  background: #25262b;
}
.goal {
  margin: 59px 0 9px;
  font-family: var(--open);
  font-size: 15px;
  line-height: 22px;
  text-align: center;
}
.meter {
  width: 375px;
  height: 8px;
  margin: 0 auto 10px;
  border-radius: 4px;
  background: #e6e6e6;
}
.meter div {
  height: 100%;
  border-radius: 4px;
  background: #f28a00;
}
.continue {
  position: relative;
  display: block;
  width: 175px;
  height: 50px;
  margin: 0 auto;
  border: 1px solid #2f80ed;
  border-radius: 4px;
  background: #d9d9d9;
  color: #2f66a0;
  font: 700 18px var(--arial);
}

/* taskbar */
.taskbar {
  display: flex;
  align-items: center;
  flex: none;
  height: 60px;
  padding: 0 0 2px 25px;
  border-top: 1px solid #3f3f3f;
  background: #212121;
  color: #fff;
}
.search {
  display: flex;
  align-items: center;
  gap: 11px;
  width: 275px;
  height: 40px;
  margin-left: 17px;
  padding-left: 14px;
  border: 1px solid #545454;
  border-radius: 20px;
  background: #404040;
}
.search input {
  width: 200px;
  padding: 0;
  border: 0;
  outline: 0;
  background: none;
}
.search input::placeholder {
  color: #d0d0d0;
  opacity: 1;
}
.apps {
  display: flex;
  gap: 11px;
  margin-left: 8px;
}
.app {
  position: relative;
  width: 44px;
  height: 50px;
  border-radius: 4px;
}
.app.current {
  border: 1px solid #3a3a3a;
  background: #2d2d2d;
  box-shadow: 6px 0 0 -1px #292929;
}
.app.running::after,
.app.current::after {
  content: '';
  position: absolute;
  bottom: 1px;
  width: 8px;
  height: 4px;
  border-radius: 2px;
  background: #999;
}
.app.current::after {
  bottom: 0;
  width: 20px;
  background: #9cc4d6;
}
.badge {
  position: absolute;
  font-weight: 400;
  text-align: center;
}
.weather {
  top: 3px;
  left: 17px;
  width: 30px;
  height: 20px;
  border-radius: 10px;
  background: #2c2c2c;
  font-size: 14px;
  line-height: 20px;
}
.todo {
  top: 3px;
  right: 1px;
  width: 20px;
  height: 20px;
  border-radius: 50%;
  background: #9cc4d6;
  color: #111;
  font-size: 14px;
  line-height: 20px;
}
.amazon {
  display: flex;
  flex-direction: column;
  width: 30px;
  height: 30px;
  background: #eee;
  color: #8e8e8e;
  font: 700 32px/22px var(--arial);
  text-align: center;
}
.tray {
  display: flex;
  align-items: center;
  margin-left: auto;
  padding-right: 19px;
  font-size: 15px;
  line-height: 20px;
  text-align: center;
}
.lang {
  margin: 0 21px 0 25px;
}
.status {
  display: flex;
  gap: 10px;
}
.clock {
  width: 98px;
  text-align: right;
}
</style>
